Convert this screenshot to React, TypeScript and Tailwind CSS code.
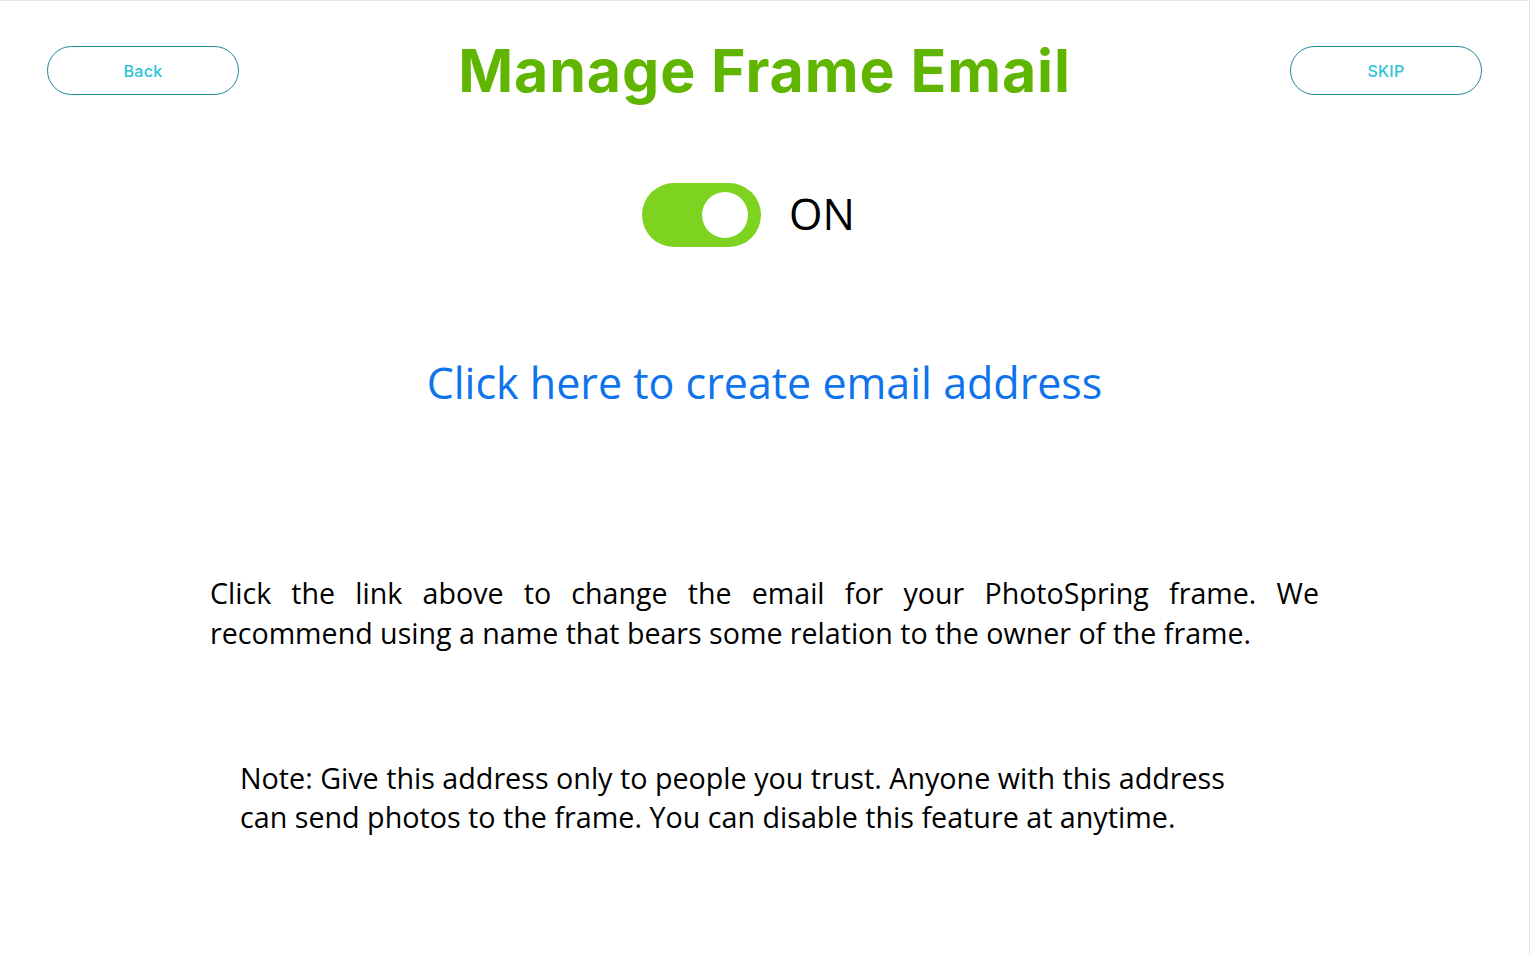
import React from "react";

export default function App() {
  return (
    <div className="w-full h-[955px] bg-white border-t border-r border-[#e6e6e6] overflow-hidden">
      <div className="pt-[45px]">
        <div className="flex items-center justify-between px-[47px] h-[49px]">
          <button className="w-[192px] h-[49px] rounded-full border border-[#1b8797] text-[#2bc4da] text-[16px] font-medium tracking-[0.3px] font-['Inter',sans-serif] flex items-center justify-center pt-[1px]">
            Back
          </button>
          <h1 className="text-[#5fb500] text-[59px] font-bold leading-none font-['Inter',sans-serif] tracking-[0.9px]">
            Manage Frame Email
          </h1>
          <button className="w-[192px] h-[49px] rounded-full border border-[#1b8797] text-[#2bc4da] text-[16px] font-medium tracking-[0.3px] font-['Inter',sans-serif] flex items-center justify-center pt-[1px]">
            SKIP
          </button>
        </div>

        <div className="mt-[88px] flex items-center ml-[642px] gap-[28px]">
          <div className="w-[119px] h-[64px] rounded-full bg-[#7ed321] flex items-center justify-end pr-[13px]">
            <div className="w-[46px] h-[46px] rounded-full bg-white" />
          </div>
          <span className="text-[43px] leading-none text-black font-['Open_Sans',sans-serif] pb-[4px]">ON</span>
        </div>

        <div className="mt-[107px] text-center">
          <a className="text-[43px] leading-[58px] text-[#0e73ec] font-['Open_Sans',sans-serif] cursor-pointer">
            Click here to create email address
          </a>
        </div>

        <div className="w-[1109px] mx-auto mt-[161px] font-['Open_Sans',sans-serif] text-black">
          <p className="text-[28.6px] leading-[39.5px] text-justify">
            Click the link above to change the email for your PhotoSpring frame. We recommend using a name that bears some relation to the owner of the frame.
          </p>
          <p className="mt-[106px] ml-[30px] w-[1020px] text-[28.7px] leading-[39px]">
            Note: Give this address only to people you trust. Anyone with this address can send photos to the frame. You can disable this feature at anytime.
          </p>
        </div>
      </div>
    </div>
  );
}
